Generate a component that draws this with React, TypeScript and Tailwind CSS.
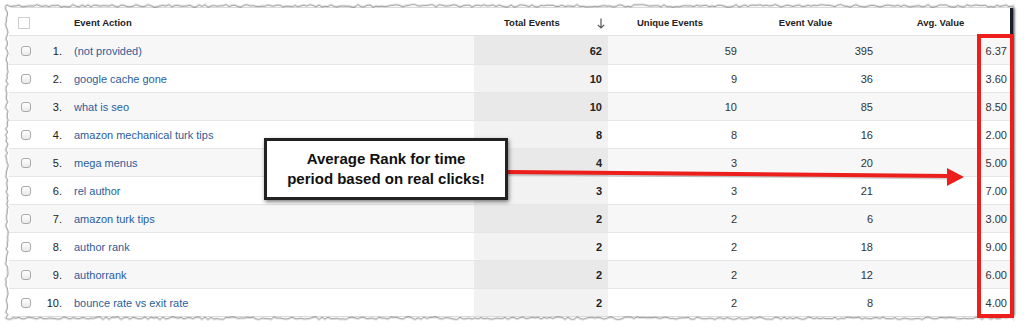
import React from "react";

const rows = [
  { n: 1, action: "(not provided)", total: 62, unique: 59, value: 395, avg: "6.37" },
  { n: 2, action: "google cache gone", total: 10, unique: 9, value: 36, avg: "3.60" },
  { n: 3, action: "what is seo", total: 10, unique: 10, value: 85, avg: "8.50" },
  { n: 4, action: "amazon mechanical turk tips", total: 8, unique: 8, value: 16, avg: "2.00" },
  { n: 5, action: "mega menus", total: 4, unique: 3, value: 20, avg: "5.00" },
  { n: 6, action: "rel author", total: 3, unique: 3, value: 21, avg: "7.00" },
  { n: 7, action: "amazon turk tips", total: 2, unique: 2, value: 6, avg: "3.00" },
  { n: 8, action: "author rank", total: 2, unique: 2, value: 18, avg: "9.00" },
  { n: 9, action: "authorrank", total: 2, unique: 2, value: 12, avg: "6.00" },
  { n: 10, action: "bounce rate vs exit rate", total: 2, unique: 2, value: 8, avg: "4.00" },
];

// jitter for the torn paper edge
const rnd = (i: number) => {
  const v = Math.sin(i * 12.9898 + 78.233) * 43758.5453;
  return v - Math.floor(v);
};

const tornPath = () => {
  const pts: string[] = [];
  let k = 0;
  // top edge, left -> right
  for (let x = 7; x <= 1012; x += 3) pts.push(`${x},${(6 + (rnd(k++) - 0.5) * 2.6).toFixed(1)}`);
  // bottom edge, right -> left
  const bottom: string[] = [];
  for (let x = 1012; x >= 7; x -= 3) bottom.push(`${x},${(318 + (rnd(k++) - 0.5) * 2.6).toFixed(1)}`);
  // left edge, bottom -> top
  const left: string[] = [];
  for (let y = 318; y >= 6; y -= 3) left.push(`${(7 + (rnd(k++) - 0.5) * 2.6).toFixed(1)},${y}`);
  return "M" + [...pts, "1013,6", "1013,318", ...bottom, ...left].join(" L") + " Z";
};

const grid = "grid grid-cols-[31px_26px_408px_134px_135px_136px_134px]";

const App = () => {
  const d = tornPath();

  return (
    <div
      className="relative w-[1024px] h-[327px] bg-white overflow-hidden"
      style={{ fontFamily: '"Liberation Sans", Arial, sans-serif' }}
    >
      {/* torn paper edge */}
      <svg className="absolute inset-0" width="1024" height="327">
        <path d={d} fill="white" stroke="#e2e2e2" strokeWidth="3" />
        <path d={d} fill="white" stroke="#a8a8a8" strokeWidth="1" />
      </svg>

      <div className="relative ml-[9px] mt-[8px] w-[1004px] border-r-[3px] border-[#1c1f2a] shadow-[2px_0_2px_rgba(0,0,0,0.45)]">
        {/* header */}
        <div className={`${grid} h-[28px] items-center text-[9.5px] font-bold text-[#222] border-b border-[#e2e2e2] bg-white`}>
          <div className="pl-[9px] pt-[2px]">
            <div className="w-[12px] h-[12px] border border-[#cfcfcf] bg-white" />
          </div>
          <div />
          <div className="pl-[8px] pt-[4px]">Event Action</div>
          <div className="flex items-center pl-[30px] pr-[3px] pt-[4px]">
            <span>Total Events</span>
            <svg className="ml-auto" width="8" height="11" viewBox="0 0 8 11">
              <path d="M4 0.5 V10 M0.8 6.8 L4 10 L7.2 6.8" fill="none" stroke="#555" strokeWidth="1.2" />
            </svg>
          </div>
          <div className="text-center pr-[11px] pt-[4px]">Unique Events</div>
          <div className="text-center pr-[11px] pt-[4px]">Event Value</div>
          <div className="text-center pr-[11px] pt-[4px]">Avg. Value</div>
        </div>

        {/* rows */}
        {rows.map((r, i) => {
          const odd = i % 2 === 0;
          return (
            <div
              key={r.n}
              className={`${grid} h-[28px] items-center text-[11px] text-[#333] ${
                i > 0 ? "border-t border-[#e6e6e6]" : ""
              } ${odd ? "bg-[#f7f7f7]" : "bg-white"}`}
            >
              <div className="pl-[12px] pt-[1px]">
                <div className="w-[10px] h-[10px] rounded-[3px] border border-[#a9a9a9] bg-gradient-to-b from-white to-[#e9e9e9]" />
              </div>
              <div className="text-right pr-[4px] pt-[2px] text-[#222]">{r.n}.</div>
              <div className="pl-[8px] pt-[2px] text-[#2c5d9b]">{r.action}</div>
              <div
                className={`h-full flex items-center justify-end pr-[6px] pt-[2px] font-bold text-[#222] ${
                  odd ? "bg-[#e9e9e9]" : "bg-[#f2f2f2]"
                }`}
              >
                {r.total}
              </div>
              <div className="text-right pr-[6px] pt-[2px]">{r.unique}</div>
              <div className="text-right pr-[6px] pt-[2px]">{r.value}</div>
              <div className="text-right pr-[6px] pt-[2px]">{r.avg}</div>
            </div>
          );
        })}
      </div>

      {/* red highlight around Avg. Value */}
      <div className="absolute left-[977px] top-[34px] w-[37px] h-[284px] border-4 border-[#ec1f1c]" />

      {/* arrow */}
      <svg className="absolute inset-0 pointer-events-none" width="1024" height="327">
        <line x1="506" y1="173.5" x2="950" y2="177.5" stroke="rgba(0,0,0,0.18)" strokeWidth="4" />
        <line x1="506" y1="172" x2="950" y2="176" stroke="#ec1f1c" strokeWidth="4" />
        <polygon points="947,168 964,177 947,186" fill="#ec1f1c" />
      </svg>

      {/* callout */}
      <div className="absolute left-[264px] top-[138px] w-[244px] h-[62px] border-[3px] border-[#222] bg-white shadow-[1px_2px_4px_rgba(0,0,0,0.5)] flex items-center justify-center text-center text-[15px] leading-[20px] font-bold text-[#111]">
        <div>
          Average Rank for time
          <br />
          period based on real clicks!
        </div>
      </div>
    </div>
  );
};

export default App;
